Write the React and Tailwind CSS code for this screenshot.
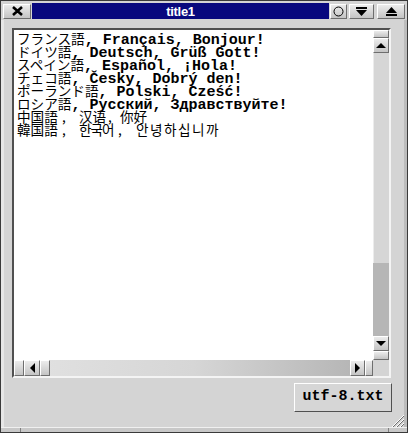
import React from 'react';

const MONO = { fontFamily: '"Liberation Mono", "DejaVu Sans Mono", monospace' };
const CJK = { fontFamily: '"Noto Sans CJK JP", "Noto Sans CJK KR", sans-serif' };
const KR = { fontFamily: '"Noto Sans CJK KR", "Noto Sans CJK JP", sans-serif' };

const rows = [
    ['フランス語', ', Français, Bonjour!'],
    ['ドイツ語', ', Deutsch, Grüß Gott!'],
    ['スペイン語', ', Español, ¡Hola!'],
    ['チェコ語', ', Česky, Dobrý den!'],
    ['ポーランド語', ', Polski, Cześć!'],
    ['ロシア語', ', Русский, Здравствуйте!'],
];

// raised bevel piece used by scrollbar and title buttons
const Bevel = ({ className = '', children }) => (
    <div className={`flex items-center justify-center border border-t-white border-l-white border-b-[#6e6e6e] border-r-[#6e6e6e] bg-gradient-to-b from-[#ececec] to-[#c4c4c4] ${className}`}>
        {children}
    </div>
);

const Tri = ({ dir }) => {
    const pts = { up: '0,5 5,0 10,5', down: '0,0 10,0 5,5', left: '5,0 5,10 0,5', right: '0,0 0,10 5,5' }[dir];
    const v = dir === 'up' || dir === 'down';
    return (
        <svg width={v ? 10 : 5} height={v ? 5 : 10} viewBox={v ? '0 0 10 5' : '0 0 5 10'}>
            <polygon points={pts} fill="#000" />
        </svg>
    );
};

export default function App() {
    return (
        <div className="w-[408px] h-[433px] flex flex-col bg-[#d4d4d4] border border-[#3a3a3a] relative overflow-hidden" style={MONO}>
            {/* title bar */}
            <div className="h-[19px] flex items-center gap-[1px] px-[2px] pt-[1px]">
                <Bevel className="w-[28px] h-[15px]">
                    <svg width="11" height="10" viewBox="0 0 11 10">
                        <path d="M1 1 L10 9 M10 1 L1 9" stroke="#000" strokeWidth="2.6" />
                    </svg>
                </Bevel>
                <div className="flex-1 h-[16px] bg-[#08087e] flex items-center justify-center">
                    <span className="text-white text-[13px] font-bold leading-none tracking-tight" style={{ fontFamily: '"Liberation Sans", Arial, sans-serif' }}>title1</span>
                </div>
                <Bevel className="w-[17px] h-[15px]">
                    <svg width="11" height="11" viewBox="0 0 11 11">
                        <circle cx="5.5" cy="5.5" r="4.5" fill="none" stroke="#000" strokeWidth="1" />
                    </svg>
                </Bevel>
                <Bevel className="w-[25px] h-[15px] ml-[1px]">
                    <svg width="11" height="9" viewBox="0 0 11 9">
                        <rect x="0" y="0" width="11" height="2" fill="#000" />
                        <polygon points="0,3 11,3 5.5,9" fill="#000" />
                    </svg>
                </Bevel>
                <Bevel className="w-[28px] h-[15px] ml-[2px]">
                    <svg width="11" height="9" viewBox="0 0 11 9">
                        <polygon points="0,6 11,6 5.5,0" fill="#000" />
                        <rect x="0" y="7" width="11" height="2" fill="#000" />
                    </svg>
                </Bevel>
            </div>

            {/* body */}
            <div className="flex-1 flex flex-col pl-[11px] pr-[13px] pt-[8px] border-l-[3px] border-r-[3px] border-l-[#e6e6e6] border-r-[#bcbcbc]">
                <div className="h-[350px] border-2 border-t-[#505050] border-l-[#505050] border-b-[#f4f4f4] border-r-[#f4f4f4] grid grid-cols-[1fr_16px] grid-rows-[1fr_16px] -ml-[3px]">
                    {/* text area */}
                    <div className="bg-white pl-[3px] pt-[2px] overflow-hidden text-black">
                        {rows.map(([jp, rest]) => (
                            <div key={jp} className="h-[13px] leading-[13px] whitespace-nowrap">
                                <span className="text-[13.6px]" style={CJK}>{jp}</span>
                                <span className="text-[15px] font-bold" style={MONO}>{rest}</span>
                            </div>
                        ))}
                        <div className="h-[13px] leading-[13px] whitespace-nowrap flex text-[13.6px]" style={CJK}>
                            <span className="w-[42px]">中国語</span>
                            <span className="w-[20px] pl-[3px]">,</span>
                            <span className="w-[27px]">汉语</span>
                            <span className="w-[14px] pl-[2px]">,</span>
                            <span>你好</span>
                        </div>
                        <div className="h-[13px] leading-[13px] whitespace-nowrap flex text-[13.6px]" style={CJK}>
                            <span className="w-[42px]">韓国語</span>
                            <span className="w-[20px] pl-[3px]">,</span>
                            <span className="w-[38px] tracking-[-1px]" style={KR}>한국어</span>
                            <span className="w-[19px] pl-[1px]">,</span>
                            <span className="tracking-[1.5px]" style={KR}>안녕하십니까</span>
                        </div>
                    </div>

                    {/* vertical scrollbar */}
                    <div className="flex flex-col bg-[#b4b4b4]">
                        <Bevel className="h-[8px]" />
                        <Bevel className="h-[15px]"><Tri dir="up" /></Bevel>
                        <div className="h-[210px] bg-[#d6d6d6] border-l border-[#ececec]" />
                        <div className="flex-1 bg-[#b6b6b6]" />
                        <Bevel className="h-[15px]"><Tri dir="down" /></Bevel>
                        <Bevel className="h-[9px]" />
                    </div>

                    {/* horizontal scrollbar */}
                    <div className="flex bg-gradient-to-r from-[#e2e2e2] via-[#d6d6d6] to-[#b2b2b2]">
                        <Bevel className="w-[10px]" />
                        <Bevel className="w-[16px]"><Tri dir="left" /></Bevel>
                        <Bevel className="w-[10px]" />
                        <div className="flex-1" />
                        <Bevel className="w-[15px]"><Tri dir="right" /></Bevel>
                        <Bevel className="w-[8px]" />
                    </div>
                    <div className="bg-[#d4d4d4]" />
                </div>

                {/* bottom button */}
                <div className="flex justify-end mt-[5px] -mr-[1px]">
                    <div className="w-[98px] h-[29px] flex items-center justify-center border border-t-white border-l-white border-b-[#505050] border-r-[#505050] bg-[#d6d6d6] text-[15px] font-bold text-black" style={MONO}>
                        utf-8.txt
                    </div>
                </div>
            </div>

            {/* resize grip */}
            <svg className="absolute right-[3px] bottom-[5px]" width="16" height="16" viewBox="0 0 16 16">
                {[4, 8, 12].map(o => (
                    <g key={o}>
                        <line x1={16 - o} y1="16" x2="16" y2={16 - o} stroke="#fff" strokeWidth="1" />
                        <line x1={17 - o} y1="16" x2="16" y2={17 - o} stroke="#707070" strokeWidth="1" />
                    </g>
                ))}
            </svg>

            {/* bottom frame */}
            <div className="h-[5px] flex border-t border-[#f0f0f0] bg-[#c8c8c8]">
                <div className="w-[20px] border-r border-[#808080]" />
                <div className="flex-1 border-r border-[#808080]" />
                <div className="w-[18px]" />
            </div>
        </div>
    );
}
